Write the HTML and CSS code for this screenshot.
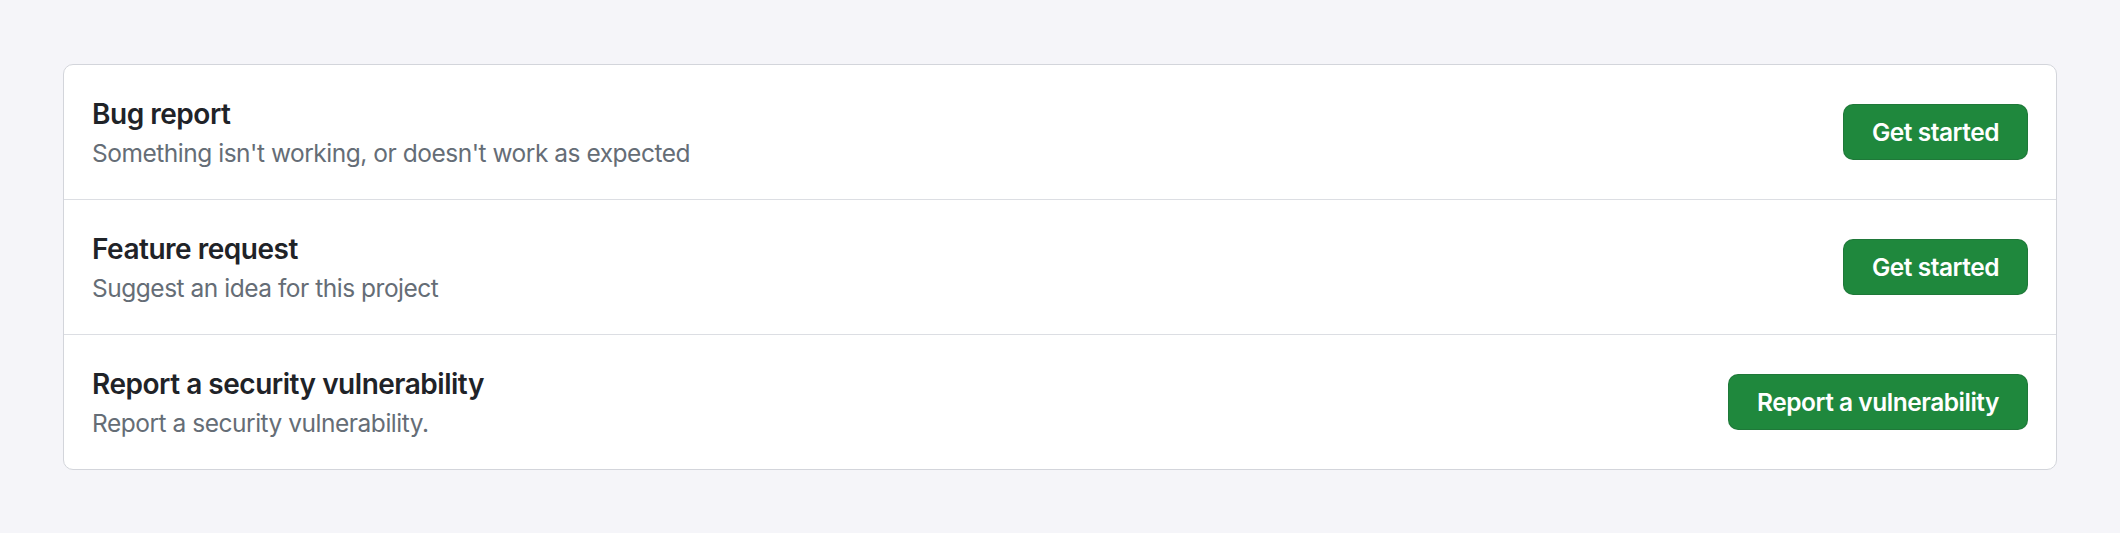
FILE: index.html
```html
<!DOCTYPE html>
<html lang="en">
<head>
<meta charset="utf-8">
<title>Issue templates</title>
<link rel="stylesheet" href="styles.css">
</head>
<body>
<main class="page">
  <div class="box">
    <div class="row">
      <div class="info">
        <div class="title">Bug report</div>
        <div class="desc">Something isn't working, or doesn't work as expected</div>
      </div>
      <a class="btn" href="#">Get started</a>
    </div>
    <div class="row">
      <div class="info">
        <div class="title">Feature request</div>
        <div class="desc">Suggest an idea for this project</div>
      </div>
      <a class="btn" href="#">Get started</a>
    </div>
    <div class="row">
      <div class="info">
        <div class="title">Report a security vulnerability</div>
        <div class="desc">Report a security vulnerability.</div>
      </div>
      <a class="btn" href="#">Report a vulnerability</a>
    </div>
  </div>
</main>
</body>
</html>
```
FILE: styles.css
```css
html, body {
  margin: 0;
  padding: 0;
  background: #f5f5f9;
}
body {
  font-family: Inter, "Noto Sans", "Liberation Sans", sans-serif;
  -webkit-font-smoothing: antialiased;
  letter-spacing: -0.03em;
}
.page {
  padding: 64px 63px;
}
.box {
  background: #ffffff;
  border: 1px solid #d3d5db;
  border-radius: 10px;
}
.row {
  display: flex;
  align-items: center;
  justify-content: space-between;
  padding: 28px;
  border-top: 1px solid #dcdee3;
}
.row:first-child {
  border-top: none;
}
.title {
  font-size: 28px;
  font-weight: 600;
  line-height: 42px;
  color: #1f2328;
}
.desc {
  font-size: 24.5px;
  line-height: 36px;
  color: #656d76;
}
.btn {
  display: inline-flex;
  align-items: center;
  height: 56px;
  box-sizing: border-box;
  padding: 0 28px;
  background: #1f883d;
  color: #ffffff;
  border: 1px solid rgba(31, 35, 40, 0.15);
  border-radius: 10px;
  font-size: 24.5px;
  font-weight: 600;
  text-decoration: none;
}
```
